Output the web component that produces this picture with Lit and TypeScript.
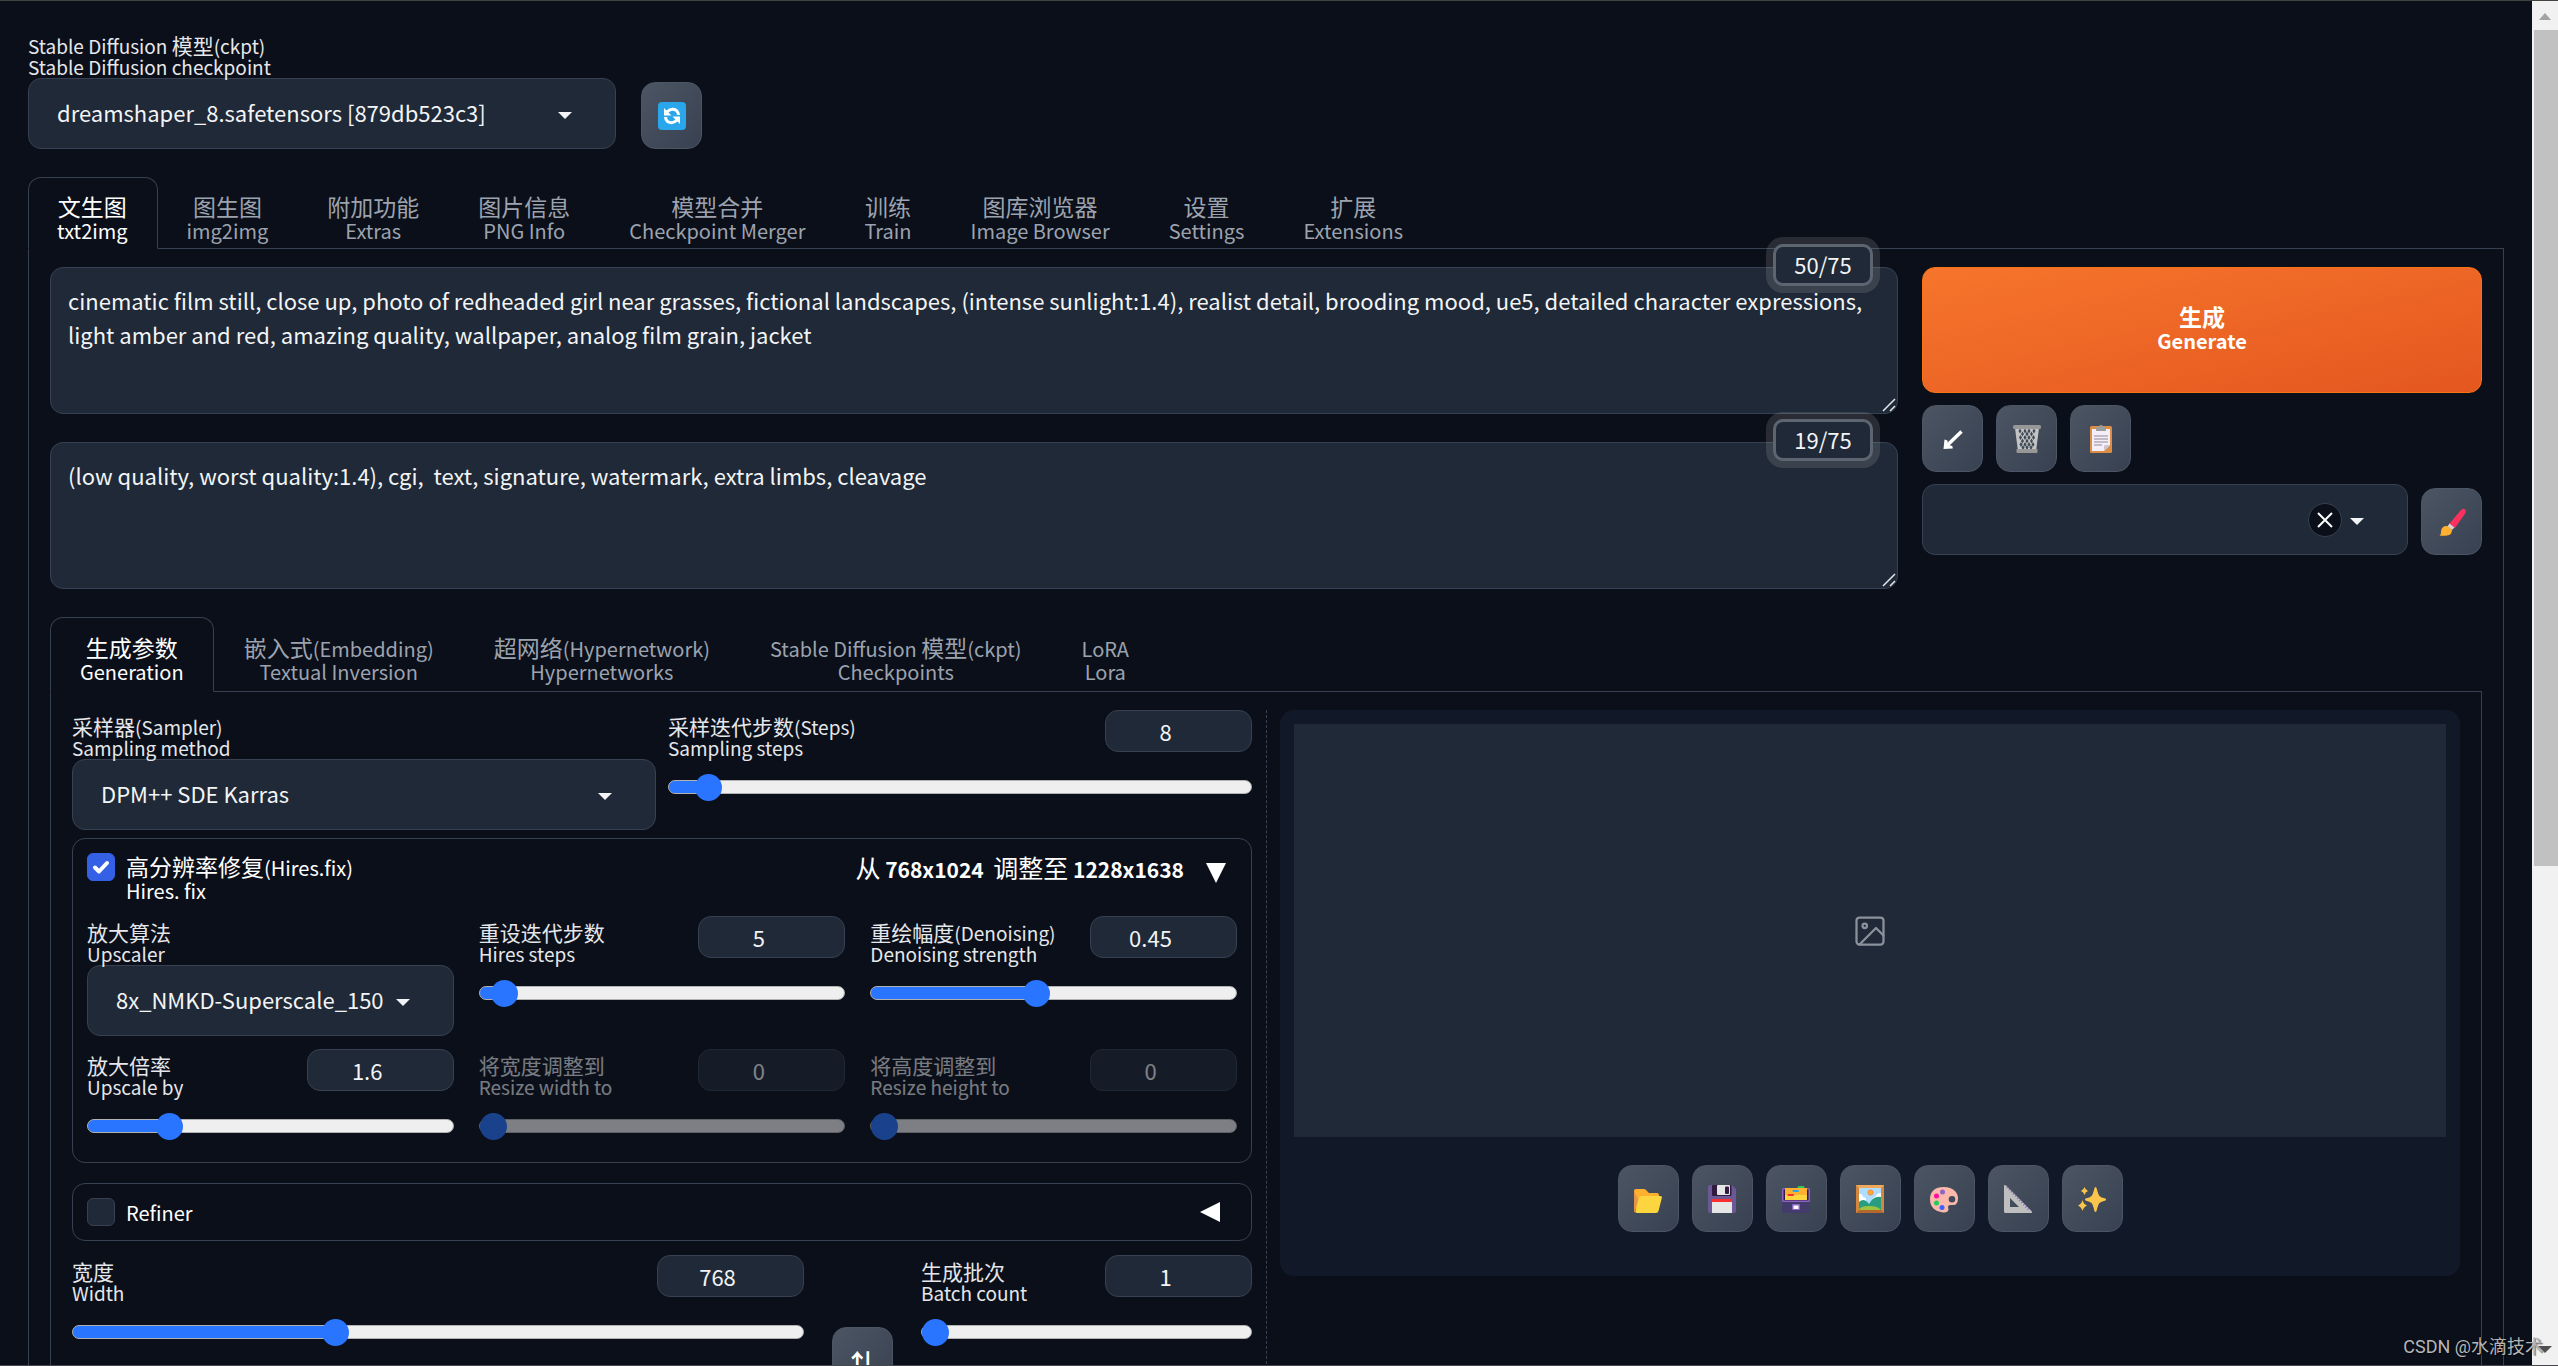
import { LitElement, html, svg, css, nothing, TemplateResult } from "lit";
import { customElement, property } from "lit/decorators.js";

const CJK = /([\u3400-\u9fff]+)/;

/** Wraps Chinese runs so that they can be sized apart from the Latin text. */
const mixed = (text: string) =>
  text
    .split(CJK)
    .filter((part) => part !== "")
    .map((part) => (CJK.test(part) ? html`<span class="zh">${part}</span>` : part));

/** Holes of the wire basket: [y, xs of the diamonds in that row]. */
const holes: [number, number[]][] = [
  [6, [7, 12, 16, 21]],
  [9, [9.5, 14, 18.5]],
  [12.5, [7.5, 12, 16, 20.5]],
  [16, [9.5, 14, 18.5]],
  [19.5, [8, 12, 16, 20]],
  [22.5, [10, 14, 18]],
];

const icons: Record<string, TemplateResult> = {
  refresh: html`<svg class="emoji" viewBox="0 0 28 28" aria-hidden="true">
    <rect width="28" height="28" rx="4" fill="#2aa6ea" />
    <path d="M9 10Q13.500 5.500 18.500 8.500 20.500 10.500 20.500 13M19 18Q14.500 22.500 9.500 19.500 7.500 17.500 7.500 15" fill="none" stroke="#fff" stroke-width="3" />
    <path d="M6 6v7.500h7.500zM22 22v-7.500h-7.500z" fill="#fff" />
  </svg>`,
  arrow: html`<svg class="emoji" viewBox="0 0 28 28" aria-hidden="true">
    <path d="M22.500 6.500 8 20.500" stroke="#fff" stroke-width="3.500" />
    <path d="M5.500 14.500l3 1 .3 4.200 4.500 1.300.5 2.500L4.500 24z" fill="#fff" />
  </svg>`,
  trash: html`<svg class="emoji" viewBox="0 0 28 28" aria-hidden="true">
    <path d="M2 3h24l-2.800 22H4.800z" fill="#c4c4c4" />
    ${holes.map(([y, xs]) =>
      xs.map((x) => svg`<path d="M${x} ${y - 2.5}l1.500 2.500-1.500 2.500-1.500-2.500z" fill="#3f4957" />`)
    )}
    <rect y="0" width="28" height="4" rx="1.500" fill="#979797" />
    <path d="M3.500 24h21v3q0 1-1 1h-19q-1 0-1-1z" fill="#979797" />
  </svg>`,
  clipboard: html`<svg class="emoji" viewBox="0 0 28 28" aria-hidden="true">
    <rect x="3" y="1" width="22" height="27" rx="1.500" fill="#dd8e43" />
    <path d="M5 4h18v16l-6 6H5z" fill="#f3eef8" />
    <path d="M23 20l-6 6v-5q0-1 1-1z" fill="#cdc4d6" />
    <path d="M7 11h14M7 14h14M7 17h14M7 20h8" stroke="#918899" stroke-width="1" />
    <path d="M9 2h3q0-2 2-2t2 2h3v4H9z" fill="#9c9c9c" />
  </svg>`,
  brush: html`<svg class="emoji" viewBox="0 0 28 28" aria-hidden="true">
    <path d="M26.500 1q2 1 1 4L17 20l-6-4L23 2q2-2 3.500-1z" fill="#f8315f" />
    <path d="M11.500 15.500l5 4-2.500 2.500-4.500-3.500z" fill="#d3d3d3" />
    <path d="M9.500 18l4.500 4q0 5-5 5.500-3 .5-7.500 0 2-1 1.500-4 .5-6 6.500-5.500z" fill="#ffb02e" />
  </svg>`,
  folder: html`<svg class="emoji" viewBox="0 0 28 28" aria-hidden="true">
    <path d="M0 6q0-2 2-2h8q1 0 2 1l3 3h8q2 0 2 2v14H2q-2 0-2-2z" fill="#ffb02e" />
    <path d="M0 6v20q0 1 1 1.500L4 14z" fill="#e19747" />
    <path d="M8 11h18q2.500 0 1.800 2l-3.300 13q-.5 2-2.500 2H3q-2 0-1.500-2L5 13q.5-2 3-2z" fill="#fcd53f" />
  </svg>`,
  floppy: html`<svg class="emoji" viewBox="0 0 28 28" aria-hidden="true">
    <path d="M2 0h22l4 4v22q0 2-2 2H2q-2 0-2-2V2q0-2 2-2z" fill="#6d5896" />
    <rect x="4" width="19.500" height="11" rx="1" fill="#321b41" />
    <rect x="9" width="13" height="10" rx="1" fill="#e6e6e6" />
    <rect x="17" y="1.500" width="4" height="7.500" rx="1" fill="#321b41" />
    <path d="M4 15q0-1 1-1h18q1 0 1 1v2H4z" fill="#f92f2f" />
    <path d="M4 17h20v11H4z" fill="#e6e6e6" />
  </svg>`,
  cardbox: html`<svg class="emoji" viewBox="0 0 28 28" aria-hidden="true">
    <rect y="3" width="28" height="14" rx="1.500" fill="#8d65c5" />
    <rect x="1.500" y="4.500" width="25" height="11" fill="#321b41" />
    <path d="M3 4q0-1 1-1h11.500l1-2h5l1 2H25v12H3z" fill="#ffb02e" />
    <path d="M15.500 3l1-2h5l1 2z" fill="#26c95a" />
    <path d="M3 10h22v5H3z" fill="#fcd53f" />
    <rect x="10.500" y="5" width="6.500" height="2" rx="1" fill="#26a5ea" />
    <rect x="5.500" y="9" width="6.500" height="2" rx="1" fill="#f92f2f" />
    <path d="M0 17h28v9q0 2-2 2H2q-2 0-2-2z" fill="#433b6b" />
    <rect x="10" y="19" width="8" height="6" rx="1" fill="#8d65c5" />
    <rect x="11.500" y="20.500" width="5" height="3.500" fill="#fff" />
  </svg>`,
  picture: html`<svg class="emoji" viewBox="0 0 28 28" aria-hidden="true">
    <rect width="28" height="28" fill="#d3883e" />
    <path d="M0 0h28l-3 3H3z" fill="#f0a95a" />
    <path d="M0 28h28l-3-3H3z" fill="#b5682c" />
    <rect x="3" y="3" width="22" height="22" fill="#aeddff" />
    <path d="M3 9q3-1 4 3l3 1v4H3zM25 8q-4 0-5 3l-4 3h9z" fill="#fff" />
    <circle cx="14.500" cy="7.500" r="2.500" fill="#ffb02e" stroke="#f9803a" />
    <path d="M3 17q5-5 10 2 5-9 12-7v13H3z" fill="#2a9d80" />
    <path d="M3 25q1-4 10-4t12 4z" fill="#9fc33f" />
  </svg>`,
  palette: html`<svg class="emoji" viewBox="0 0 28 28" aria-hidden="true">
    <path
      d="M14 2C23 2 28 7.500 28 13q0 8-6 7-4-.5-4 1.500l.5 3Q18 28 13 27.500 0 25.500 0 14.500 0 2 14 2zM22 11a3.300 3.300 0 1 0 0 6.600 3.300 3.300 0 0 0 0-6.600z"
      fill="#fbb8ab" fill-rule="evenodd" />
    <circle cx="12.500" cy="7" r="2.500" fill="#8d65c5" />
    <circle cx="6.500" cy="11" r="2.500" fill="#fc0fa0" />
    <circle cx="6.500" cy="18" r="2.500" fill="#26c95a" />
    <circle cx="12" cy="22.500" r="2.500" fill="#3f5fff" />
  </svg>`,
  triangle: html`<svg class="emoji" viewBox="0 0 28 28" aria-hidden="true">
    <path d="M0 1.500Q0-1 2 .5L27.500 26q1.500 2-1 2H1.500Q0 28 0 26.500zM6 13v9h9z" fill="#bfbfbf" fill-rule="evenodd" />
    <path d="M3 2l23 24" stroke="#8d65c5" stroke-width="2" stroke-dasharray="1 2" />
  </svg>`,
  sparkles: html`<svg class="emoji" viewBox="0 0 28 28" aria-hidden="true">
    <g fill="#fbc44a">
      <path d="M17.500 2q.8 0 1.200 1.500 1.500 6 2.800 7.500t6 2.600Q28 14 28 14.500t-.5 1q-4.500 1-6 2.500t-2.800 7.500q-.4 1.500-1.200 1.500t-1.200-1.500q-1.300-6-2.800-7.500t-6-2.500q-.5-.3-.5-1t.5-.9q4.500-1.100 6-2.600t2.800-7.500Q16.700 2 17.500 2z" />
      <path d="M6.500 2q.8 2.800 3.500 4-2.700 1.200-3.500 4-.8-2.800-3.500-4 2.700-1.200 3.500-4zM4.500 15q.9 4 4.500 5.500-3.600 1.500-4.500 5.500Q3.600 22 0 20.500 3.600 19 4.500 15z" />
    </g>
  </svg>`,
};

const shared = css`
  :host {
    --bg: #0b0f19;
    --panel: #111827;
    --input: #1f2937;
    --line: #374151;
    --muted: #9ca3af;
    --label: #e5e7eb;
    --text: #f3f4f6;
    --blue: #2a75ff;
  }
  *,
  *::before,
  *::after {
    box-sizing: border-box;
  }
  button,
  input,
  select,
  textarea {
    font: inherit;
    color: inherit;
    margin: 0;
  }
  .zh {
    font-size: 23px;
    line-height: 0;
  }
  .label {
    font-size: 19px;
    line-height: 21px;
    color: var(--label);
    padding-top: 6px;
    white-space: nowrap;
    position: relative;
    display: block;
  }
  .label span {
    display: block;
  }
  .label .zh {
    display: inline;
    font-size: 21px;
  }
  .emoji {
    display: block;
    width: 28px;
    height: 28px;
  }
`;

@customElement("tool-button")
class ToolButton extends LitElement {
  static styles = [
    shared,
    css`
      :host {
        display: block;
      }
      .tool {
        display: grid;
        place-items: center;
        width: 61px;
        height: 67px;
        padding: 0;
        border: 1px solid #4b5563;
        border-radius: 14px;
        background: linear-gradient(to bottom right, #4b5563, #374151);
        color: #fff;
        font-size: 24px;
        font-weight: 700;
      }
    `,
  ];
  @property() icon = "";
  @property() name = "";
  render() {
    return html`<button class="tool" type="button" aria-label=${this.name}>
      ${icons[this.icon] ?? this.icon}
    </button>`;
  }
}

@customElement("drop-down")
class DropDown extends LitElement {
  static styles = [
    shared,
    css`
      :host {
        display: block;
      }
      .box {
        display: grid;
        align-items: center;
      }
      .box > * {
        grid-area: 1 / 1;
      }
      .labelled {
        margin-top: 1px;
      }
      .select {
        appearance: none;
        width: 100%;
        height: 71px;
        padding: 0 28px 3px;
        border: 1px solid var(--line);
        border-radius: 13px;
        background: var(--input);
        color: var(--text);
        font-size: 22px;
      }
      .marks {
        position: relative;
        justify-self: end;
        display: flex;
        align-items: center;
        gap: 8px;
        margin-right: 44px;
      }
      .caret {
        width: 14px;
        height: 7px;
        margin-top: 3px;
        fill: var(--text);
      }
      .clear {
        width: 34px;
        height: 34px;
        padding: 0;
        display: grid;
        place-items: center;
        border: 1px solid var(--line);
        border-radius: 50%;
        background: var(--bg);
      }
      .clear svg {
        width: 18px;
        height: 18px;
        stroke: #fff;
        stroke-width: 2;
      }
    `,
  ];
  @property() zh = "";
  @property() en = "";
  @property() value = "";
  @property({ type: Boolean }) clearable = false;
  render() {
    return html`
      ${this.zh
        ? html`<label class="label" for="field"><span>${mixed(this.zh)}</span><span>${this.en}</span></label>`
        : nothing}
      <div class="box ${this.zh ? "labelled" : ""}">
        <select id="field" class="select" aria-label=${this.en}>
          <option>${this.value}</option>
        </select>
        <div class="marks">
          ${this.clearable
            ? html`<button class="clear" type="button" aria-label="Clear">
                <svg viewBox="0 0 18 18"><path d="M2 2l14 14M16 2L2 16" /></svg>
              </button>`
            : nothing}
          <svg class="caret" viewBox="0 0 14 7" aria-hidden="true"><path d="M0 0h14L7 7z" /></svg>
        </div>
      </div>
    `;
  }
}

@customElement("slider-field")
class SliderField extends LitElement {
  static styles = [
    shared,
    css`
      :host {
        display: block;
      }
      .off {
        opacity: 0.5;
      }
      .head {
        display: flex;
        justify-content: space-between;
        height: 42px;
        margin-bottom: 21px;
      }
      .number {
        appearance: textfield;
        width: 147px;
        height: 42px;
        padding: 0 26px 1px 0;
        border: 1px solid var(--line);
        border-radius: 13px;
        background: var(--input);
        color: var(--text);
        font-size: 22px;
        text-align: center;
      }
      .number::-webkit-inner-spin-button {
        display: none;
      }
      .range {
        appearance: none;
        display: block;
        width: 100%;
        height: 28px;
        background: none;
      }
      .range::-webkit-slider-runnable-track {
        height: 14px;
        border: 1px solid #b2b2b2;
        border-radius: 7px;
        background: linear-gradient(
          to right,
          var(--blue) calc(14px + (100% - 28px) * var(--at)),
          #efefef calc(14px + (100% - 28px) * var(--at))
        );
      }
      .range::-webkit-slider-thumb {
        appearance: none;
        width: 27px;
        height: 27px;
        margin-top: -7px;
        border-radius: 50%;
        background: var(--blue);
      }
    `,
  ];
  @property() zh = "";
  @property() en = "";
  @property({ type: Number }) min = 0;
  @property({ type: Number }) max = 100;
  @property({ type: Number }) value = 0;
  @property({ type: Boolean }) disabled = false;
  render() {
    const at = (this.value - this.min) / (this.max - this.min);
    return html`<div class=${this.disabled ? "off" : ""}>
      <div class="head">
        <label class="label" for="num"><span>${mixed(this.zh)}</span><span>${this.en}</span></label>
        <input id="num" class="number" type="number" step="any" .value=${String(this.value)} ?disabled=${this.disabled} />
      </div>
      <input
        class="range"
        type="range"
        aria-label=${this.en}
        style="--at:${at}"
        min=${this.min}
        max=${this.max}
        step="any"
        .value=${String(this.value)}
        ?disabled=${this.disabled}
      />
    </div>`;
  }
}

@customElement("prompt-box")
class PromptBox extends LitElement {
  static styles = [
    shared,
    css`
      :host {
        display: block;
        position: relative;
      }
      .area {
        display: block;
        width: 100%;
        height: 147px;
        padding: 15px 17px;
        border: 1px solid var(--line);
        border-radius: 13px;
        background: var(--input);
        color: var(--text);
        font-size: 22px;
        line-height: 34px;
        resize: none;
      }
      .count {
        position: absolute;
        top: -23px;
        right: 25px;
        width: 100px;
        height: 42px;
        display: grid;
        place-items: center;
        padding-bottom: 2px;
        border: 3px solid #5d6570;
        border-radius: 10px;
        background: var(--input);
        box-shadow: 0 0 0 7px rgba(192, 192, 192, 0.17);
        color: var(--text);
        font-size: 22px;
        line-height: 34px;
      }
      .grip {
        position: absolute;
        right: 2px;
        bottom: 2px;
        width: 14px;
        height: 14px;
        fill: none;
        stroke: #e5e7eb;
        stroke-width: 1.5;
      }
    `,
  ];
  @property() value = "";
  @property() count = "";
  @property() name = "";
  render() {
    return html`
      <textarea class="area" aria-label=${this.name} .value=${this.value}></textarea>
      <svg class="grip" viewBox="0 0 14 14" aria-hidden="true"><path d="M1 13L13 1M8 13l5-5" /></svg>
      <span class="count">${this.count}</span>
    `;
  }
}

const mainTabs = [
  ["文生图", "txt2img"],
  ["图生图", "img2img"],
  ["附加功能", "Extras"],
  ["图片信息", "PNG Info"],
  ["模型合并", "Checkpoint Merger"],
  ["训练", "Train"],
  ["图库浏览器", "Image Browser"],
  ["设置", "Settings"],
  ["扩展", "Extensions"],
];

const subTabs = [
  ["生成参数", "Generation"],
  ["嵌入式(Embedding)", "Textual Inversion"],
  ["超网络(Hypernetwork)", "Hypernetworks"],
  ["Stable Diffusion 模型(ckpt)", "Checkpoints"],
  ["LoRA", "Lora"],
];

const galleryTools = [
  ["folder", "Open folder"],
  ["floppy", "Save"],
  ["cardbox", "Save zip"],
  ["picture", "Send to img2img"],
  ["palette", "Send to inpaint"],
  ["triangle", "Send to extras"],
  ["sparkles", "Upscale"],
];

@customElement("app-root")
class AppRoot extends LitElement {
  static styles = [
    shared,
    css`
      :host {
        display: flex;
        height: 100vh;
        overflow: hidden;
        border-top: 1px solid #41453f;
        border-bottom: 1px solid #47494c;
        box-sizing: border-box;
        background: var(--bg);
        color: #fff;
        font-family: "Noto Sans CJK SC", "Noto Sans", sans-serif;
        font-size: 21px;
      }
      .page {
        flex: 1;
        min-width: 0;
        padding: 28px 28px 0;
        overflow: hidden;
      }
      .quick {
        display: flex;
        align-items: flex-end;
        gap: 25px;
        margin-bottom: 28px;
      }
      .quick drop-down {
        flex: 0 1 588px;
      }
      .tabs {
        display: flex;
        position: relative;
        margin-bottom: -1px;
      }
      .tab {
        padding: 18px 29px 6px 28px;
        border: 1px solid transparent;
        border-bottom-color: var(--line);
        border-radius: 13px 13px 0 0;
        background: none;
        color: var(--muted);
        font-size: 20px;
        line-height: 23px;
        text-align: center;
        white-space: nowrap;
      }
      .tab.inner {
        padding: 19px 29px 8px;
      }
      .tab > span {
        display: block;
      }
      .tab.on {
        border-color: var(--line);
        border-bottom-color: var(--bg);
        background: var(--bg);
        color: #fff;
      }
      .panel {
        border: 1px solid var(--line);
        padding: 18px 21px 60px;
      }
      .top {
        display: grid;
        grid-template-columns: 33fr 10fr;
        gap: 24px;
        margin-bottom: 28px;
      }
      .prompts {
        display: grid;
        gap: 28px;
      }
      .actions {
        display: flex;
        flex-direction: column;
        gap: 12px;
      }
      .generate {
        height: 126px;
        padding: 0 0 2px;
        border: 1px solid #f97316;
        border-radius: 13px;
        background: linear-gradient(to bottom right, #f6752c, #e4571f);
        color: #fff;
        font-size: 20px;
        font-weight: 700;
        line-height: 23px;
      }
      .generate > span {
        display: block;
      }
      .row {
        display: flex;
        gap: 13px;
        align-items: flex-end;
      }
      .grow {
        flex: 1;
        min-width: 0;
      }
      .work {
        display: grid;
        grid-template-columns: minmax(0, 1fr) 28px minmax(0, 1fr);
      }
      .divider {
        justify-self: center;
        border-left: 1px dashed var(--line);
      }
      .pair {
        display: grid;
        grid-template-columns: 1fr 1fr;
        gap: 12px;
        margin-bottom: 8px;
      }
      .card {
        border: 1px solid var(--line);
        border-radius: 13px;
        padding: 14px;
        margin-bottom: 14px;
      }
      .card.open {
        padding-bottom: 22px;
        margin-bottom: 20px;
      }
      .cardhead {
        display: flex;
        align-items: flex-start;
        gap: 11px;
      }
      .open .cardhead {
        height: 49px;
        margin-bottom: 14px;
      }
      .check {
        appearance: none;
        flex: none;
        width: 28px;
        height: 28px;
        border: 1px solid var(--line);
        border-radius: 6px;
        background: var(--input);
      }
      .tick {
        display: grid;
      }
      .tick > * {
        grid-area: 1 / 1;
      }
      .tick svg {
        position: relative;
        width: 28px;
        height: 28px;
        fill: none;
        stroke: #fff;
        stroke-width: 4;
        stroke-linecap: round;
        stroke-linejoin: round;
        pointer-events: none;
      }
      .check:checked {
        background: #3460e6;
        border-color: #3460e6;
      }
      .name {
        flex: 1;
        padding-top: 3px;
        font-size: 20px;
        line-height: 23px;
      }
      .name > span {
        display: block;
      }
      .size {
        padding-top: 4px;
        font-weight: 700;
        line-height: 24px;
        white-space: pre;
      }
      .size .zh {
        font-weight: 400;
        font-size: 25px;
      }
      .mark {
        width: 20px;
        height: 20px;
        margin: 10px 11px 0;
        fill: #fff;
      }
      .mark.shut {
        margin: 4px 17px 0 0;
      }
      .three {
        display: grid;
        grid-template-columns: repeat(3, minmax(0, 1fr));
        gap: 13px 25px;
      }
      .dims {
        display: flex;
        gap: 28px;
      }
      .dims .wide {
        flex: 732;
      }
      .dims .slim {
        flex: 331;
      }
      .swap {
        margin-top: 72px;
      }
      .gallery {
        align-self: start;
        padding: 14px 14px 44px;
        border-radius: 14px;
        background: var(--panel);
      }
      .preview {
        display: grid;
        place-items: center;
        height: 413px;
        margin-bottom: 28px;
        background: var(--input);
      }
      .preview svg {
        width: 36px;
        height: 36px;
        fill: none;
        stroke: #8c929c;
        stroke-width: 1.5;
        stroke-linecap: round;
        stroke-linejoin: round;
      }
      .tools {
        display: flex;
        justify-content: center;
        gap: 13px;
      }
      .scroll {
        flex: none;
        width: 26px;
        display: flex;
        flex-direction: column;
        align-items: center;
        background: #f1f1f1;
      }
      .scroll svg {
        flex: none;
        width: 14px;
        height: 29px;
      }
      .thumb {
        flex: 16;
        width: 24px;
        align-self: flex-end;
        background: #c1c1c1;
      }
      .rest {
        flex: 9;
      }
      .credit {
        position: absolute;
        right: 15px;
        bottom: 4px;
        font-family: Roboto, "Noto Sans CJK SC", sans-serif;
        font-size: 18px;
        line-height: 30px;
        color: #b4b6ba;
        text-shadow: 1px 1px 1px rgba(0, 0, 0, 0.6);
      }
    `,
  ];

  private tabs(list: string[][], inner: boolean) {
    return html`<nav class="tabs" role="tablist">
      ${list.map(
        ([zh, en], i) => html`<button
          class="tab ${i === 0 ? "on" : ""} ${inner ? "inner" : ""}"
          type="button"
          role="tab"
          aria-selected=${i === 0 ? "true" : "false"}
        ><span>${mixed(zh)}</span><span>${en}</span></button>`
      )}
    </nav>`;
  }

  private settings() {
    return html`<div>
      <div class="pair">
        <drop-down zh="采样器(Sampler)" en="Sampling method" value="DPM++ SDE Karras"></drop-down>
        <slider-field zh="采样迭代步数(Steps)" en="Sampling steps" min="1" max="150" value="8"></slider-field>
      </div>
      <section class="card open">
        <div class="cardhead">
          <span class="tick">
            <input id="hires" class="check" type="checkbox" checked />
            <svg viewBox="0 0 28 28" aria-hidden="true"><path d="M8 14.500l4 4 8-8.500" /></svg>
          </span>
          <label class="name" for="hires"><span>${mixed("高分辨率修复(Hires.fix)")}</span><span>Hires. fix</span></label>
          <span class="size">${mixed("从 768x1024  调整至 1228x1638")}</span>
          <svg class="mark" viewBox="0 0 20 20" aria-hidden="true"><path d="M0 0h20L10 20z" /></svg>
        </div>
        <div class="three">
          <drop-down zh="放大算法" en="Upscaler" value="8x_NMKD-Superscale_150"></drop-down>
          <slider-field zh="重设迭代步数" en="Hires steps" min="0" max="150" value="5"></slider-field>
          <slider-field zh="重绘幅度(Denoising)" en="Denoising strength" min="0" max="1" value="0.45"></slider-field>
          <slider-field zh="放大倍率" en="Upscale by" min="1" max="4" value="1.6"></slider-field>
          <slider-field zh="将宽度调整到" en="Resize width to" min="0" max="2048" value="0" disabled></slider-field>
          <slider-field zh="将高度调整到" en="Resize height to" min="0" max="2048" value="0" disabled></slider-field>
        </div>
      </section>
      <section class="card">
        <div class="cardhead">
          <input id="refiner" class="check" type="checkbox" />
          <label class="name" for="refiner">Refiner</label>
          <svg class="mark shut" viewBox="0 0 20 20" aria-hidden="true"><path d="M20 0v20L0 10z" /></svg>
        </div>
      </section>
      <div class="dims">
        <slider-field class="wide" zh="宽度" en="Width" min="64" max="2048" value="768"></slider-field>
        <tool-button class="swap" icon="⇅" name="Swap width and height"></tool-button>
        <slider-field class="slim" zh="生成批次" en="Batch count" min="1" max="100" value="1"></slider-field>
      </div>
    </div>`;
  }

  render() {
    return html`
      <main class="page">
        <div class="quick">
          <drop-down
            zh="Stable Diffusion 模型(ckpt)"
            en="Stable Diffusion checkpoint"
            value="dreamshaper_8.safetensors [879db523c3]"
          ></drop-down>
          <tool-button icon="refresh" name="Refresh"></tool-button>
        </div>
        ${this.tabs(mainTabs, false)}
        <div class="panel">
          <div class="top">
            <div class="prompts">
              <prompt-box
                name="Prompt"
                count="50/75"
                value="cinematic film still, close up, photo of redheaded girl near grasses, fictional landscapes, (intense sunlight:1.4), realist detail, brooding mood, ue5, detailed character expressions, light amber and red, amazing quality, wallpaper, analog film grain, jacket"
              ></prompt-box>
              <prompt-box
                name="Negative prompt"
                count="19/75"
                value="(low quality, worst quality:1.4), cgi,  text, signature, watermark, extra limbs, cleavage"
              ></prompt-box>
            </div>
            <div class="actions">
              <button class="generate" type="button"><span>${mixed("生成")}</span><span>Generate</span></button>
              <div class="row">
                <tool-button icon="arrow" name="Read last parameters"></tool-button>
                <tool-button icon="trash" name="Clear prompt"></tool-button>
                <tool-button icon="clipboard" name="Apply styles"></tool-button>
              </div>
              <div class="row">
                <drop-down class="grow" en="Styles" clearable></drop-down>
                <tool-button icon="brush" name="Edit styles"></tool-button>
              </div>
            </div>
          </div>
          ${this.tabs(subTabs, true)}
          <div class="panel">
            <div class="work">
              ${this.settings()}
              <div class="divider"></div>
              <section class="gallery">
                <div class="preview">
                  <svg viewBox="0 0 24 24" aria-hidden="true">
                    <rect x="3" y="3" width="18" height="18" rx="2" />
                    <circle cx="8.500" cy="8.500" r="1.500" />
                    <path d="M21 15l-5-5L5 21" />
                  </svg>
                </div>
                <div class="tools">
                  ${galleryTools.map(([icon, name]) => html`<tool-button icon=${icon} name=${name}></tool-button>`)}
                </div>
              </section>
            </div>
          </div>
        </div>
      </main>
      <div class="scroll" aria-hidden="true">
        <svg viewBox="0 0 14 29"><path d="M1 19h12L7 12z" fill="#a3a3a3" /></svg>
        <div class="thumb"></div>
        <div class="rest"></div>
        <svg viewBox="0 0 14 29"><path d="M0 10h14L7 17z" fill="#505050" /></svg>
      </div>
      <span class="credit">CSDN @水滴技术</span>
    `;
  }
}
